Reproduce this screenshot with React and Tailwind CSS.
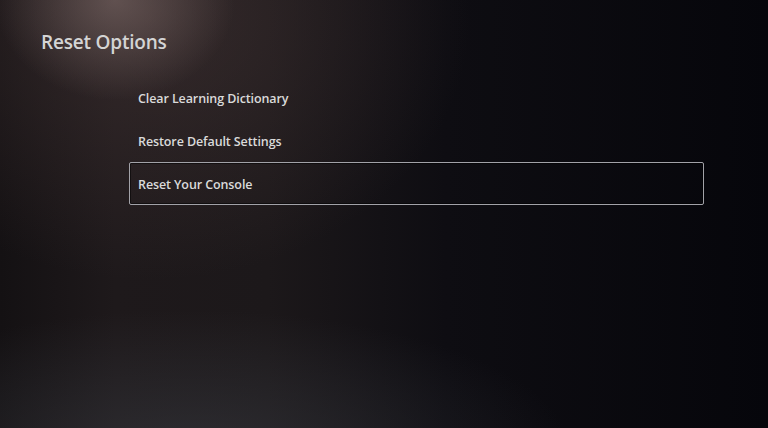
export default function App() {
  const items = ["Clear Learning Dictionary", "Restore Default Settings", "Reset Your Console"];
  return (
    <div
      className="w-[768px] h-[428px] overflow-hidden bg-[radial-gradient(ellipse_120px_100px_at_115px_0px,rgba(135,115,112,0.55),transparent_100%),radial-gradient(ellipse_320px_260px_at_150px_20px,rgba(75,58,58,0.5),transparent_100%),radial-gradient(ellipse_380px_140px_at_190px_450px,rgba(55,57,63,0.6),transparent_100%),linear-gradient(90deg,#141113_0%,#1e191b_15%,#1c181a_35%,#0e0d12_58%,#06060b_100%)] text-[#dcdcdc]"
      style={{ fontFamily: '"Open Sans", "Noto Sans", sans-serif' }}
    >
      <div className="pl-[41px] pt-[28px]">
        <h1 className="text-[19px] leading-[28px] font-semibold tracking-[-0.2px] text-[#d4d4d4]">Reset Options</h1>
      </div>
      <div className="mt-[20px] ml-[129px] w-[575px] flex flex-col">
        {items.map((t, i) => (
          <div
            key={t}
            className={
              "h-[43px] flex items-center pl-[8px] pt-[3px] rounded-[2px] " +
              (i === 2 ? "border border-[#a2a2a8] shadow-[inset_0_0_0_1px_rgba(0,0,0,0.5)]" : "border border-transparent")
            }
          >
            <span className="text-[12.5px] font-semibold tracking-[-0.1px] text-[#dadada]">{t}</span>
          </div>
        ))}
      </div>
    </div>
  );
}
